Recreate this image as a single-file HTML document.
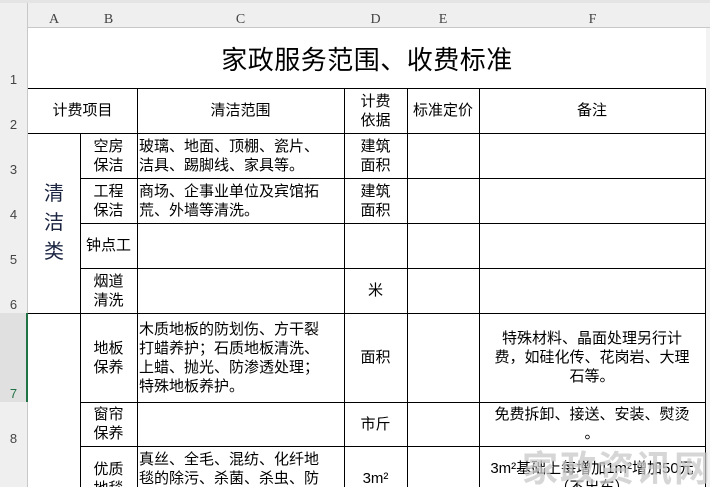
<!DOCTYPE html>
<html><head><meta charset="utf-8"><style>
html,body{margin:0;width:710px;height:487px;overflow:hidden}
body{background:#fff;position:relative;font-family:"Liberation Sans","Noto Sans CJK SC",sans-serif;color:#000}
.a{position:absolute}
.h{background:#000}
.t{position:absolute;font-size:15px;line-height:19px;display:flex;align-items:center;justify-content:center;text-align:center;white-space:nowrap}
.l{justify-content:flex-start;text-align:left;padding-left:2px}
.ch{position:absolute;top:10px;height:18px;font-size:14px;color:#444;text-align:center;line-height:19px;font-family:"Liberation Serif",serif}
.rh{position:absolute;left:0;width:27px;font-size:13px;color:#444;text-align:center;font-family:"Liberation Sans",sans-serif}
</style></head><body>
<div class="a" style="left:0;top:0;width:710px;height:3px;background:#e4e4e4"></div>
<div class="a" style="left:0;top:3px;width:710px;height:25px;background:#efefef;border-bottom:1px solid #c8c8c8;box-sizing:border-box"></div>
<div class="a" style="left:0;top:3px;width:28px;height:484px;background:#efefef;border-right:1px solid #c8c8c8;box-sizing:border-box"></div>
<div class="a" style="left:0;top:313px;width:28px;height:89px;background:#e0e0e0;border-right:2px solid #217346;box-sizing:border-box"></div>
<div class="ch" style="left:28px;width:52px">A</div>
<div class="ch" style="left:80px;width:57px">B</div>
<div class="ch" style="left:137px;width:207px">C</div>
<div class="ch" style="left:344px;width:63px">D</div>
<div class="ch" style="left:407px;width:72px">E</div>
<div class="ch" style="left:479px;width:227px">F</div>
<div class="rh" style="top:72px">1</div>
<div class="rh" style="top:117px">2</div>
<div class="rh" style="top:162px">3</div>
<div class="rh" style="top:207px">4</div>
<div class="rh" style="top:252px">5</div>
<div class="rh" style="top:297px">6</div>
<div class="rh" style="top:386px;color:#217346">7</div>
<div class="rh" style="top:431px">8</div>
<div class="t" style="left:28px;top:28px;width:678px;height:60px;font-size:26px;padding-top:4px;box-sizing:border-box;letter-spacing:0.5px">家政服务范围、收费标准</div>
<div class="a h" style="left:28px;top:88px;width:678px;height:1px"></div>
<div class="a h" style="left:28px;top:133px;width:678px;height:1px"></div>
<div class="a h" style="left:80px;top:178px;width:626px;height:1px"></div>
<div class="a h" style="left:80px;top:223px;width:626px;height:1px"></div>
<div class="a h" style="left:80px;top:268px;width:626px;height:1px"></div>
<div class="a h" style="left:28px;top:313px;width:678px;height:1px"></div>
<div class="a h" style="left:80px;top:402px;width:626px;height:1px"></div>
<div class="a h" style="left:80px;top:446px;width:626px;height:1px"></div>
<div class="a h" style="left:80px;top:133px;width:1px;height:354px"></div>
<div class="a h" style="left:137px;top:88px;width:1px;height:399px"></div>
<div class="a h" style="left:344px;top:88px;width:1px;height:399px"></div>
<div class="a h" style="left:407px;top:88px;width:1px;height:399px"></div>
<div class="a h" style="left:479px;top:88px;width:1px;height:399px"></div>
<div class="a h" style="left:705px;top:88px;width:1px;height:399px"></div>
<div class="a" style="left:706px;top:28px;width:4px;height:459px;background:#f3f3f3"></div>
<div class="t" style="left:28px;top:88px;width:109px;height:45px">计费项目</div>
<div class="t" style="left:137px;top:88px;width:207px;height:45px">清洁范围</div>
<div class="t" style="left:344px;top:88px;width:63px;height:45px">计费<br>依据</div>
<div class="t" style="left:407px;top:88px;width:72px;height:45px">标准定价</div>
<div class="t" style="left:479px;top:88px;width:226px;height:45px">备注</div>
<div class="t" style="left:28px;top:133px;width:52px;height:180px;font-size:20px;line-height:29px;color:#1a2440">清<br>洁<br>类</div>
<div class="t" style="left:80px;top:133px;width:57px;height:45px">空房<br>保洁</div>
<div class="t l" style="left:137px;top:133px;width:205px;height:45px">玻璃、地面、顶棚、瓷片、<br>洁具、踢脚线、家具等。</div>
<div class="t" style="left:344px;top:133px;width:63px;height:45px">建筑<br>面积</div>
<div class="t" style="left:80px;top:178px;width:57px;height:45px">工程<br>保洁</div>
<div class="t l" style="left:137px;top:178px;width:205px;height:45px">商场、企事业单位及宾馆拓<br>荒、外墙等清洗。</div>
<div class="t" style="left:344px;top:178px;width:63px;height:45px">建筑<br>面积</div>
<div class="t" style="left:80px;top:223px;width:57px;height:45px">钟点工</div>
<div class="t" style="left:80px;top:268px;width:57px;height:45px">烟道<br>清洗</div>
<div class="t" style="left:344px;top:268px;width:63px;height:45px">米</div>
<div class="t" style="left:80px;top:313px;width:57px;height:89px">地板<br>保养</div>
<div class="t l" style="left:137px;top:313px;width:205px;height:89px">木质地板的防划伤、方干裂<br>打蜡养护；石质地板清洗、<br>上蜡、抛光、防渗透处理；<br>特殊地板养护。</div>
<div class="t" style="left:344px;top:313px;width:63px;height:89px">面积</div>
<div class="t" style="left:479px;top:313px;width:226px;height:89px">特殊材料、晶面处理另行计<br>费，如硅化传、花岗岩、大理<br>石等。</div>
<div class="t" style="left:80px;top:402px;width:57px;height:44px">窗帘<br>保养</div>
<div class="t" style="left:344px;top:402px;width:63px;height:44px">市斤</div>
<div class="t" style="left:479px;top:402px;width:226px;height:44px">免费拆卸、接送、安装、熨烫<br>。</div>
<div class="t" style="left:80px;top:460px;width:57px;height:40px;align-items:flex-start">优质<br>地毯</div>
<div class="t l" style="left:137px;top:450px;width:205px;height:40px;align-items:flex-start">真丝、全毛、混纺、化纤地<br>毯的除污、杀菌、杀虫、防</div>
<div class="t" style="left:344px;top:469px;width:63px;height:20px;align-items:flex-start">3m²</div>
<div class="t" style="left:479px;top:459px;width:226px;height:30px;align-items:flex-start">3m²基础上每增加1m²增加50元<br>（不出车）</div>
<div class="a" style="left:522px;top:449px;font-size:36px;font-weight:bold;color:rgba(200,200,200,0.75);letter-spacing:2px;line-height:40px;white-space:nowrap">家政资讯网</div>
</body></html>
